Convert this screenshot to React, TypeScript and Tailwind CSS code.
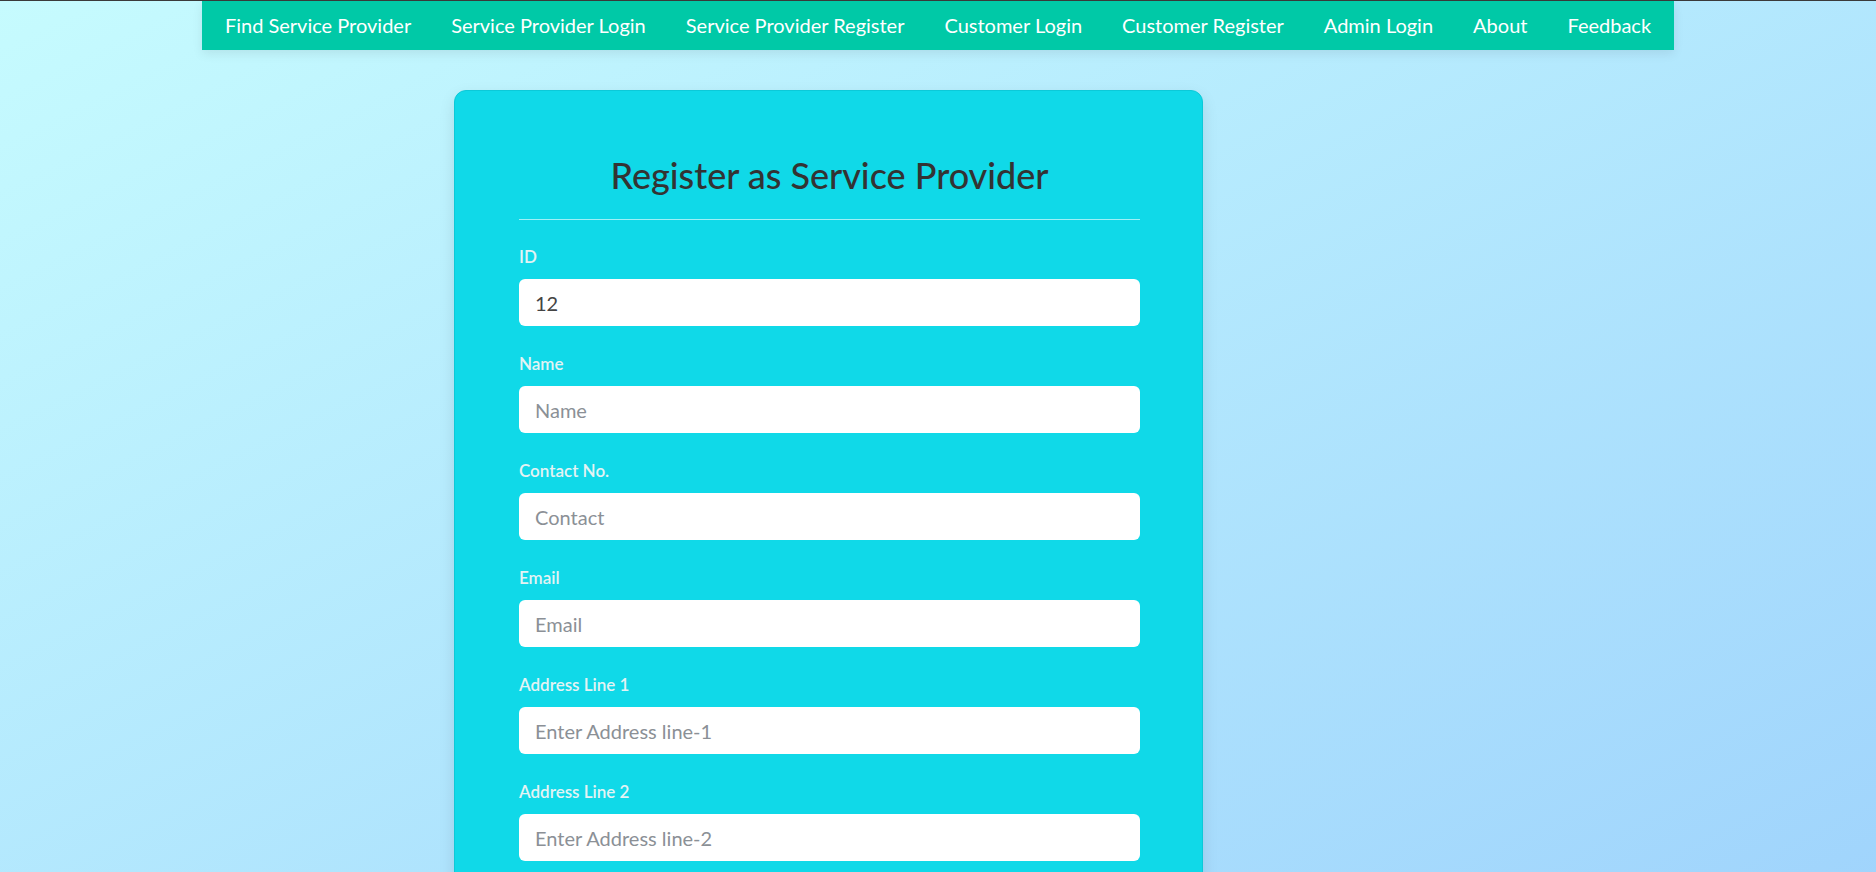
import { useState } from 'react'

const navLinks = [
  'Find Service Provider',
  'Service Provider Login',
  'Service Provider Register',
  'Customer Login',
  'Customer Register',
  'Admin Login',
  'About',
  'Feedback',
]

const fields = [
  { label: 'ID', name: 'id', placeholder: 'ID' },
  { label: 'Name', name: 'name', placeholder: 'Name' },
  { label: 'Contact No.', name: 'contact', placeholder: 'Contact' },
  { label: 'Email', name: 'email', placeholder: 'Email' },
  { label: 'Address Line 1', name: 'addr1', placeholder: 'Enter Address line-1' },
  { label: 'Address Line 2', name: 'addr2', placeholder: 'Enter Address line-2' },
]

export default function App() {
  const [form, setForm] = useState<Record<string, string>>({ id: '12' })

  return (
    <div
      className="min-h-screen w-full border-t border-[#3a3a3a] bg-gradient-to-br from-[#c6fbfe] to-[#9fd3fc] text-[#333]"
      style={{ fontFamily: 'Lato, "Open Sans", sans-serif' }}
    >
      {/* top nav */}
      <nav className="mx-auto flex h-[49px] w-fit items-center bg-[#00c9a7] px-[3px] shadow-[0_4px_10px_rgba(0,0,0,0.08)]">
        {navLinks.map((l) => (
          <a key={l} href="#" className="px-5 text-[20px] leading-[49px] text-white">
            {l}
          </a>
        ))}
      </nav>

      <div className="mt-[40px] flex pl-[454px]">
        <div className="w-[749px] rounded-[12px] border border-[#0cc9d8] bg-[#10d9e8] pl-[64px] pr-[62px] pt-[63px] pb-12 shadow-[0_6px_16px_rgba(0,0,0,0.1)]">
          <h2 className="mb-[23px] text-center text-[36px] leading-[42px] font-medium text-[#333]">
            Register as Service Provider
          </h2>
          <hr className="mb-[25px] border-t border-white/60" />

          {fields.map((f) => (
            <div key={f.name} className="mb-[26px] flex flex-col">
              <label className="mb-[10px] h-6 text-[17px] leading-6 font-semibold text-[#e4f3f4]">{f.label}</label>
              <input
                className="h-[47px] rounded-[6px] bg-white px-4 text-[20px] text-[#444] outline-none placeholder:text-[#8b9096]"
                placeholder={f.placeholder}
                value={form[f.name] ?? ''}
                onChange={(e) => setForm({ ...form, [f.name]: e.target.value })}
              />
            </div>
          ))}
        </div>
      </div>
    </div>
  )
}
